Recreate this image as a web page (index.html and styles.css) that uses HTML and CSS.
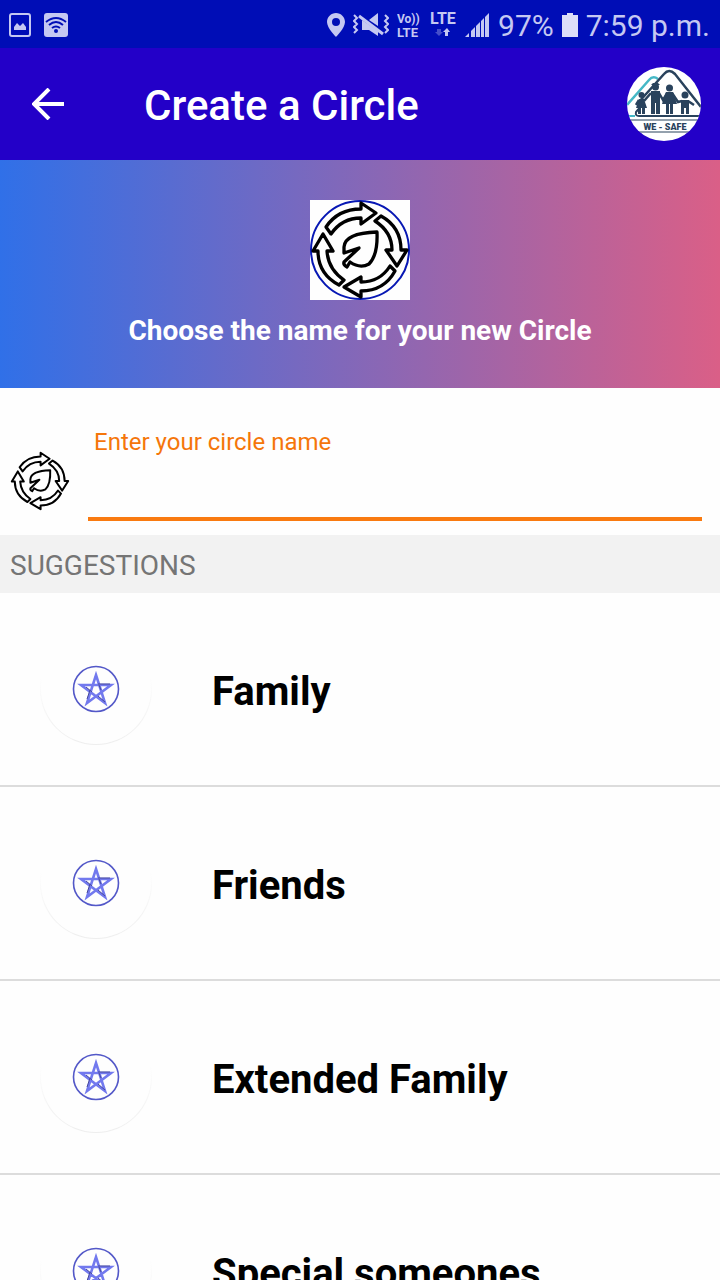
FILE: index.html
```html
<!DOCTYPE html>
<html lang="en">
<head>
<meta charset="UTF-8" />
<meta name="viewport" content="width=device-width, initial-scale=1" />
<title>Create a Circle</title>
<link rel="stylesheet" href="styles.css">
</head>
<body>
<!-- Shared icons -->
<svg class="sprite" aria-hidden="true">
  <symbol id="eco" viewBox="0 0 100 100">
    <g fill="none" stroke="#000" stroke-width="3.3" stroke-linejoin="round">
      <path d="M16 27Q28 9 51 9V3L66 13L51 24V18Q32 18 21 34Z" />
      <path d="M71 16Q91 27 91 50H97L87 66L76 50H82Q82 32 65 21Z" />
      <path d="M85 71Q74 91 51 91V97L34 87L51 77V82Q70 82 80 66Z" />
      <path d="M29 85Q8 74 8 51H3L13 34L23 51H17Q18 69 34 80Z" />
      <path d="M67 32Q35 33 34 47V53L49 48L34 62Q33 65 37 67L40 62Q50 69 59 64Q68 55 67 32Z" />
    </g>
  </symbol>
  <symbol id="star" viewBox="0 0 48 48">
    <g fill="none">
      <circle cx="24" cy="24" r="22.5" stroke="#5358c8" stroke-width="1.6" />
      <path d="M24 10L33 38L9 20H39L15 38Z" stroke="#7279ee" stroke-width="2.6" stroke-miterlimit="10" />
      <path d="M26 19H38M18 25L15 34M26 31L33 37M27 20L29 25M14 22L20 27" stroke="#484a9c" stroke-width="1" />
    </g>
  </symbol>
</svg>

<div class="app">
  <div class="status-bar">
    <div class="status-group">
      <svg width="22" height="26" viewBox="0 0 22 26">
        <rect x="1" y="2" width="20" height="22" rx="2" fill="none" stroke="#c5c8f2" stroke-width="2" />
        <path d="M5 18V15L8 11L11 14L14 11L17 15V18Z" fill="#c5c8f2" />
      </svg>
      <svg width="24" height="26" viewBox="0 0 24 26">
        <rect y="1" width="24" height="24" rx="3" fill="#c5c8f2" />
        <g fill="none" stroke="#000db6" stroke-width="2">
          <path d="M2 10Q12 2 22 10M5 13Q12 7 19 13M8 16Q12 13 16 16" />
        </g>
        <circle cx="12" cy="19" r="2" fill="#000db6" />
      </svg>
    </div>
    <div class="status-group">
      <svg width="18" height="26" viewBox="0 0 18 26">
        <path fill="#c5c8f2" fill-rule="evenodd" d="M9 1C4 1 0 5 0 10C0 16 9 25 9 25S18 16 18 10C18 5 14 1 9 1ZM9 6A4 4 0 1 1 9 14A4 4 0 1 1 9 6Z" />
      </svg>
      <svg width="36" height="26" viewBox="0 0 36 26">
        <g fill="none" stroke="#c5c8f2" stroke-width="2">
          <path d="M1 3L4 6L1 9L4 12L1 15L4 18L1 21M32 3L35 6L32 9L35 12L32 15L35 18L32 21" />
          <path d="M6 4L30 22" stroke-width="3" />
        </g>
        <path d="M9 8L25 19V24L16 18H9ZM16 8L25 1V14Z" fill="#c5c8f2" />
      </svg>
      <svg width="25" height="28" viewBox="0 0 25 28" class="net">
        <text x="0" y="12" font-size="12">Vo))</text>
        <text x="0" y="26" font-size="13">LTE</text>
      </svg>
      <svg width="27" height="28" viewBox="0 0 27 28" class="net">
        <text x="0" y="13" font-size="16">LTE</text>
        <path d="M7 18H11V21H13L9 25L5 21H7Z" opacity=".35" />
        <path d="M15 25H18V21H20L17 17L13 21H15Z" />
      </svg>
      <svg width="25" height="26" viewBox="0 0 25 26" fill="#c5c8f2">
        <path d="M0 25L4 21V25ZM6 25V19L10 15V25ZM11 25V14L15 10V25ZM16 25V9L19 6V25ZM20 25V5L24 1V25Z" />
      </svg>
      <span class="status-text">97%</span>
      <svg width="16" height="26" viewBox="0 0 16 26">
        <path d="M0 3H5V1H11V3H16V25H0Z" fill="#dcdef8" />
      </svg>
      <span class="status-text">7:59 p.m.</span>
    </div>
  </div>

  <header class="app-bar">
    <button type="button" class="back" aria-label="Back">
      <svg width="32" height="32" viewBox="0 0 32 32">
        <path d="M32 16H3M17 1L2 16L17 31" fill="none" stroke="#fff" stroke-width="4" />
      </svg>
    </button>
    <h1>Create a Circle</h1>
    <svg class="logo" viewBox="0 0 74 74" role="img" aria-label="We-Safe">
      <clipPath id="badge"><circle cx="37" cy="37" r="37" /></clipPath>
      <g clip-path="url(#badge)">
        <rect width="74" height="74" fill="#fff" />
        <path d="M0 38L22 13Q26 8 31 12" fill="none" stroke="#45b8c6" stroke-width="2.5" />
        <path d="M11 36L37 7Q42 1 48 7L74 40" fill="none" stroke="#29425c" stroke-width="2.5" />
        <path d="M15 38L9 45Q8 49 12 49H74" fill="none" stroke="#29425c" stroke-width="2" />
        <path d="M0 49H8" stroke="#45b8c6" stroke-width="2" />
        <g fill="#29425c">
          <circle cx="14.500" cy="28" r="3" />
          <circle cx="28.500" cy="20" r="3.500" /><path d="M24 18L26 16H31L33 18Z" />
          <circle cx="42.500" cy="21" r="3.500" />
          <circle cx="58" cy="28" r="3.500" />
          <path d="M12 32H17L20 41H18V47H15V41H14V47H11V41H9Z" />
          <path d="M24 24H33V47H29V36H28V47H24Z" />
          <path d="M39 25H46L50 37H46V47H43V37H42V47H39V37H35Z" />
          <path d="M54 33H62V47H59V41H57V47H54Z" />
        </g>
        <path d="M12 33L9 38M17 34L24 26M32 26L36 33L40 26M45 26L51 35L55 34M61 34L67 38" fill="none" stroke="#29425c" stroke-width="2.500" />
        <path d="M0 53H74M0 65H74" stroke="#29425c" stroke-width="1" />
        <text x="38" y="63" class="logo-text">WE - SAFE</text>
      </g>
    </svg>
  </header>

  <section class="hero">
    <svg class="hero-icon" viewBox="0 0 100 100">
      <circle cx="50" cy="50" r="49" fill="none" stroke="#0717b4" stroke-width="2" />
      <use href="#eco" />
    </svg>
    <p>Choose the name for your new Circle</p>
  </section>

  <section class="name-form">
    <svg class="form-icon"><use href="#eco" /></svg>
    <div class="field">
      <label for="circle-name">Enter your circle name</label>
      <input type="text" id="circle-name" />
    </div>
  </section>

  <h2>SUGGESTIONS</h2>
  <ul class="suggestions">
    <li>
      <span class="avatar"><svg><use href="#star" /></svg></span>
      <span class="name">Family</span>
    </li>
    <li>
      <span class="avatar"><svg><use href="#star" /></svg></span>
      <span class="name">Friends</span>
    </li>
    <li>
      <span class="avatar"><svg><use href="#star" /></svg></span>
      <span class="name">Extended Family</span>
    </li>
    <li>
      <span class="avatar"><svg><use href="#star" /></svg></span>
      <span class="name">Special someones</span>
    </li>
  </ul>
</div>
</body>
</html>
```
FILE: styles.css
```css
* {
  box-sizing: border-box;
}
body {
  margin: 0;
  font-family: Roboto, "Noto Sans", sans-serif;
  background: #fefefe;
  color: #000;
}
h1, h2, p, ul {
  margin: 0;
  padding: 0;
}
svg {
  flex: none;
  display: block;
}
.sprite {
  position: absolute;
  width: 0;
  height: 0;
}
.app {
  display: flex;
  flex-direction: column;
  height: 100vh;
}
.app > * {
  flex: none;
}

/* Status bar */
.status-bar {
  display: flex;
  justify-content: space-between;
  align-items: center;
  height: 48px;
  padding: 2px 10px 0 9px;
  background: #000db6;
  color: #c5c8f2;
}
.status-group {
  display: flex;
  align-items: center;
  gap: 8px;
}
.status-group:first-child {
  gap: 13px;
}
.status-text {
  padding-top: 2px;
  font-size: 30px;
  line-height: 40px;
}
.net {
  fill: #c5c8f2;
  font-weight: 700;
}

/* App bar */
.app-bar {
  display: flex;
  align-items: center;
  height: 112px;
  padding: 0 19px 0 32px;
  background: #2300c8;
  color: #fff;
}
.back {
  padding: 0;
  border: 0;
  background: none;
}
.app-bar h1 {
  flex: 1;
  padding: 4px 0 0 80px;
  font-size: 42px;
  font-weight: 500;
  line-height: 48px;
}
.logo {
  width: 74px;
  height: 74px;
}
.logo-text {
  font-size: 9px;
  font-weight: 900;
  fill: #29425c;
  text-anchor: middle;
}

/* Banner */
.hero {
  display: flex;
  flex-direction: column;
  align-items: center;
  gap: 12px;
  padding: 40px 20px 38px;
  background: linear-gradient(to right, #3070e8, #da5f87);
  color: #fff;
}
.hero-icon {
  width: 100px;
  height: 100px;
  background: #fefefe;
}
.hero p {
  font-size: 28px;
  font-weight: 700;
  line-height: 38px;
}

/* Circle name */
.name-form {
  display: flex;
  align-items: flex-end;
  gap: 18px;
  padding: 38px 18px 14px 10px;
}
.form-icon {
  width: 60px;
  height: 60px;
  margin-bottom: 10px;
}
.field {
  flex: 1;
  display: flex;
  flex-direction: column;
  min-width: 0;
}
.field label {
  padding-left: 6px;
  font-size: 24px;
  line-height: 32px;
  color: #f5760a;
}
.field input {
  width: 100%;
  height: 63px;
  padding: 0 6px;
  border: 0;
  border-bottom: 4px solid #f97a10;
  background: none;
  font: inherit;
  font-size: 32px;
  outline: none;
}

/* Suggestions */
h2 {
  padding: 12px 10px 8px;
  background: #f2f2f2;
  color: #757575;
  font-size: 28px;
  font-weight: 400;
  line-height: 38px;
}
.app .suggestions {
  flex: 1;
  min-height: 0;
  overflow-y: auto;
  scrollbar-width: none;
  list-style: none;
}
.suggestions li {
  display: flex;
  align-items: center;
  gap: 60px;
  height: 194px;
  padding: 0 40px;
  border-bottom: 2px solid #dcdcdc;
}
.avatar {
  display: flex;
  align-items: center;
  justify-content: center;
  width: 112px;
  height: 112px;
  border-radius: 50%;
  background: linear-gradient(#fefefe, #fefefe) padding-box, linear-gradient(#fefefe 40%, #eee) border-box;
  border: 1px solid transparent;
}
.avatar svg {
  width: 48px;
  height: 48px;
}
.name {
  padding-top: 6px;
  font-size: 40px;
  font-weight: 700;
  line-height: 48px;
}
```
